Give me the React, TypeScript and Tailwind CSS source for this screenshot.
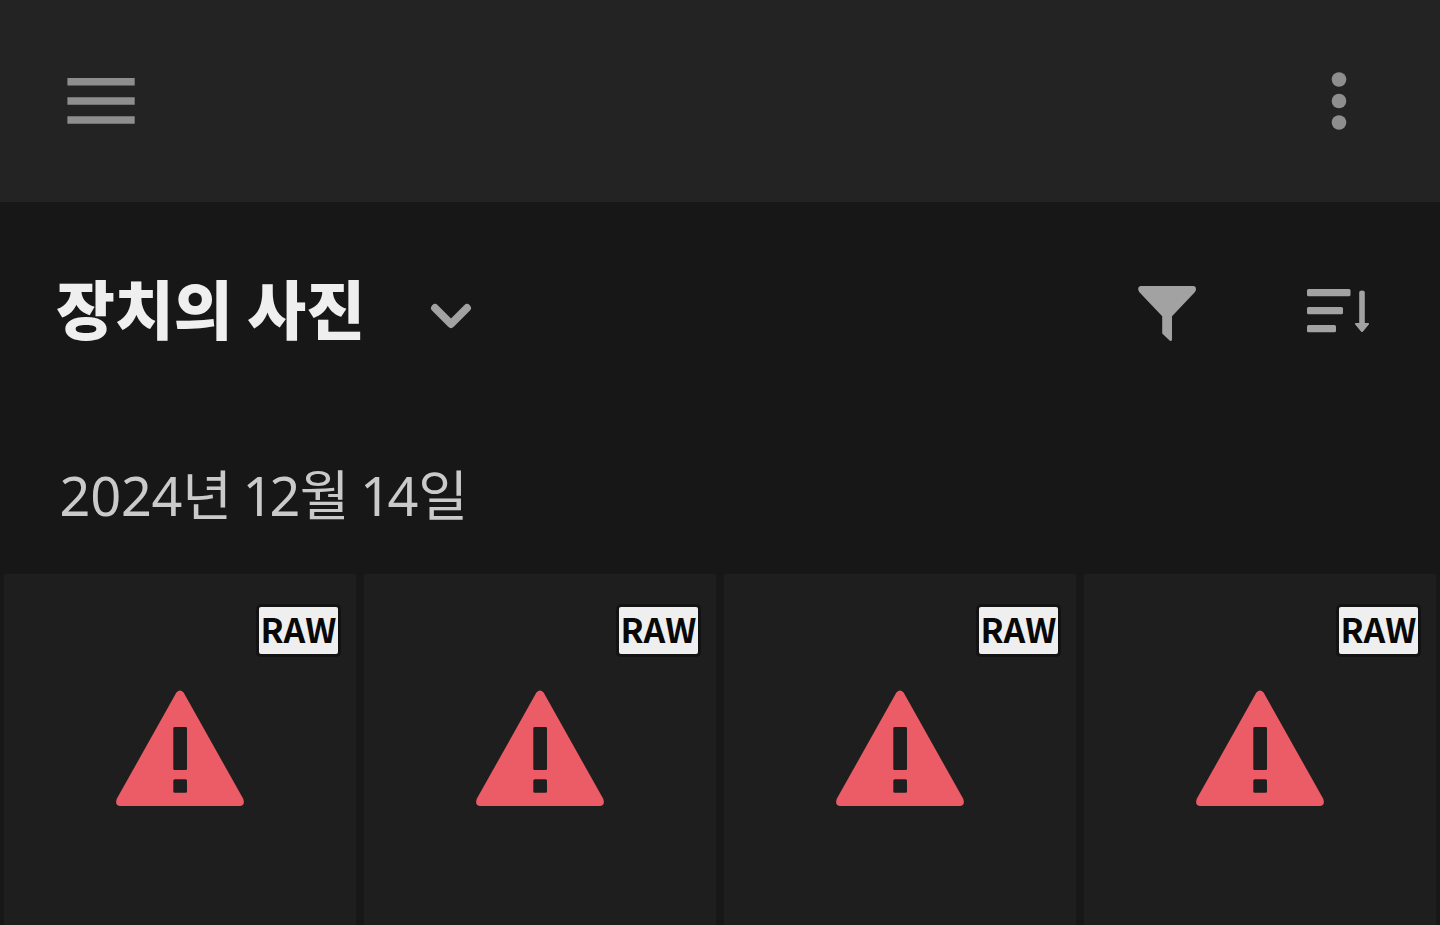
const photos = [1, 2, 3, 4];

function WarningIcon() {
  return (
    <svg className="h-[120px] w-32" viewBox="0 0 128 120" fill="#ec5c66" role="img" aria-label="오류">
      <path
        fillRule="evenodd"
        d="M60.4 2.6Q64 -1.400 67.600 2.600L127.200 108.800Q129.600 115.800 123.400 116H4.600Q-1.600 115.800 0.800 108.800ZM58.600 37Q57.300 37 57.300 38.300V78.700Q57.300 80 58.600 80H69.700Q71 80 71 78.700V38.300Q71 37 69.700 37ZM58.800 89.300Q57.300 89.300 57.300 90.800V101.300Q57.300 102.800 58.800 102.800H69.500Q71 102.800 71 101.300V90.800Q71 89.300 69.500 89.300Z"
      />
    </svg>
  );
}

function PhotoTile() {
  return (
    <li className="relative flex aspect-square items-center justify-center bg-[#1e1e1e]">
      <WarningIcon />
      <span className="absolute right-[18px] top-[33px] flex h-[47px] w-[79px] items-center justify-center rounded-[2px] bg-[#efefef] pb-1 text-[34px] font-bold leading-none text-[#080808] ring-3 ring-[#131313]">
        RAW
      </span>
    </li>
  );
}

export default function App() {
  return (
    <div className="h-screen overflow-hidden bg-[#171717] font-['Noto_Sans_CJK_KR',sans-serif]">
      <header className="flex h-[202px] items-center justify-between bg-[#232323] pl-[67px] pr-[91px] text-[#8e8e8e]">
        <button type="button" aria-label="메뉴">
          <svg className="h-[46px] w-[68px]" viewBox="0 0 68 46" fill="currentColor">
            <path d="M.4 0H67.700V7.500H.4ZM.4 19.200H67.700V26.800H.4ZM.4 38.300H67.700V45.800H.4Z" />
          </svg>
        </button>
        <button type="button" aria-label="더 보기">
          <svg className="h-[60px] w-5" viewBox="0 0 20 60" fill="currentColor">
            <circle cx="10" cy="8.500" r="7.300" />
            <circle cx="10" cy="30" r="7.300" />
            <circle cx="10" cy="51.500" r="7.300" />
          </svg>
        </button>
      </header>

      <main>
        <div className="flex h-[216px] items-center justify-between pl-14 pr-[70px] text-[#a2a2a2]">
          <h1>
            <button type="button" aria-haspopup="listbox" className="flex items-center gap-[62px]">
              <span className="pb-2 text-[64px] font-black leading-[64px] text-[#efefef]">장치의 사진</span>
              <svg className="size-12" viewBox="0 0 48 48" fill="none" stroke="currentColor" strokeWidth="7.800" strokeLinecap="round" strokeLinejoin="round">
                <path d="M8 22L24 38L40 22" />
              </svg>
            </button>
          </h1>
          <div className="flex items-center gap-[107px]">
            <button type="button" aria-label="필터">
              <svg className="size-16" viewBox="0 0 64 64" fill="currentColor">
                <path d="M6.200 8H58Q61 8 61 11Q61 12.700 60 14L37 38.200V61Q37 64 34.600 62.500L27.200 55.500V38.200L4.200 14Q3.200 12.700 3.200 11Q3.200 8 6.200 8Z" />
              </svg>
            </button>
            <button type="button" aria-label="정렬">
              <svg className="size-16" viewBox="0 0 64 64" fill="currentColor">
                <rect x="1" y="11" width="43.500" height="7.300" rx="1.500" />
                <rect x="1" y="29" width="36" height="7.300" rx="1.500" />
                <rect x="1" y="47" width="29" height="7.300" rx="1.500" />
                <path d="M53.200 14.500Q53.200 12.500 56 12.500Q58.800 12.500 58.800 14.500V45H62.300Q63.600 45.300 62.800 46.500L57 53.500Q56 54.500 55 53.500L49.200 46.500Q48.400 45.300 49.700 45H53.200Z" />
              </svg>
            </button>
          </div>
        </div>

        <section>
          <h2 className="flex h-[156px] items-center pb-0.5 pl-[60px] font-['Noto_Sans','Noto_Sans_CJK_KR',sans-serif] text-[54px] leading-[64px] text-[#cacaca] proportional-nums">
            2024년 12월 14일
          </h2>
          <ul className="grid grid-cols-4 gap-2 px-1">
            {photos.map((id) => (
              <PhotoTile key={id} />
            ))}
          </ul>
        </section>
      </main>
    </div>
  );
}
